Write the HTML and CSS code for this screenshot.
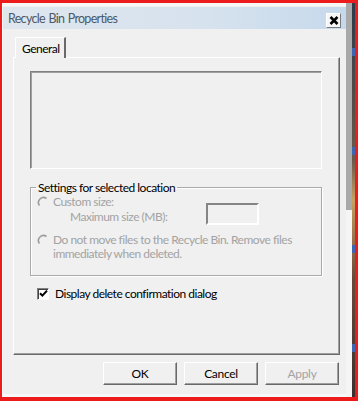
FILE: index.html
```html
<!doctype html>
<html lang="en">
  <head>
    <meta charset="utf-8" />
    <meta name="viewport" content="width=device-width, initial-scale=1" />
    <title>Recycle Bin Properties</title>
    <link rel="stylesheet" href="styles.css">
  </head>
  <body>
    <div class="frame">
      <div class="window">
        <div class="titlebar">
          <span class="title">Recycle Bin Properties</span>
          <button class="close" aria-label="Close">
            <svg width="10" height="9" viewBox="0 0 10 9">
              <path d="M1.5 1 L8.5 8 M8.5 1 L1.5 8" stroke="#000" stroke-width="2.6" />
            </svg>
          </button>
        </div>

        <div class="content">
          <div class="tabs">
            <div class="tab">General</div>
          </div>

          <div class="panel">
            <div class="listbox"></div>

            <fieldset class="group">
              <legend>Settings for selected location</legend>

              <div class="option">
                <svg class="radio" width="12" height="12" viewBox="0 0 12 12">
                  <circle cx="6" cy="6" r="5" fill="#f0f0f0" />
                  <path d="M2.5 9.5 A5 5 0 0 1 9.5 2.5" fill="none" stroke="#9c9c9c" stroke-width="1.6" />
                </svg>
                <div class="option-text">
                  <div>Custom size:</div>
                  <div class="max-row">
                    <span class="max-label">Maximum size (MB):</span>
                    <span class="textbox"></span>
                  </div>
                </div>
              </div>

              <div class="option">
                <svg class="radio" width="12" height="12" viewBox="0 0 12 12">
                  <circle cx="6" cy="6" r="5" fill="#f0f0f0" />
                  <path d="M2.5 9.5 A5 5 0 0 1 9.5 2.5" fill="none" stroke="#9c9c9c" stroke-width="1.6" />
                </svg>
                <div class="option-text">
                  Do not move files to the Recycle Bin. Remove files<br />
                  immediately when deleted.
                </div>
              </div>
            </fieldset>

            <label class="check-row">
              <span class="checkbox">
                <svg width="9" height="9" viewBox="0 0 9 9">
                  <path d="M1 4.2 L3.4 6.6 L8 1.6" fill="none" stroke="#000" stroke-width="2" />
                </svg>
              </span>
              Display delete confirmation dialog
            </label>
          </div>

          <div class="buttons">
            <button class="btn">OK</button>
            <button class="btn">Cancel</button>
            <button class="btn" disabled>Apply</button>
          </div>
        </div>
      </div>

      <div class="desk">
        <div class="scroll">
          <div class="thumb"></div>
        </div>
        <div class="strip">
          <span class="dot"></span>
          <span class="dot"></span>
          <span class="dot"></span>
          <span class="dot"></span>
        </div>
      </div>
    </div>
  </body>
</html>
```

FILE: styles.css
```css
:root {
  --face: #f0f0f0;
  --shadow: #a0a0a0;
  --dark: #696969;
  --disabled: #a3a3a3;
  --red: #ed1c1c;
}

html,
body {
  margin: 0;
  padding: 0;
  background-color: var(--red);
}

body {
  font-family: Lato, 'Noto Sans', sans-serif;
  font-size: 12px;
  letter-spacing: -0.5px;
  color: #000;
}

.frame {
  box-sizing: border-box;
  width: 358px;
  height: 401px;
  padding: 3px 3px 4px 2px;
  display: flex;
}

.window {
  flex: 1;
  display: flex;
  flex-direction: column;
  background-color: var(--face);
  border-left: 1px solid #fbfbfb;
  border-top: 3px solid #f7f7f7;
  border-bottom: 3px solid #f6f8fb;
}

.titlebar {
  height: 22px;
  margin-top: 1px;
  display: flex;
  align-items: center;
  justify-content: space-between;
  padding: 0 5px 0 5px;
  background: linear-gradient(90deg, #dfe6ee 0%, #d6e2ee 60%, #c6d9ec 100%);
}

.title {
  font-size: 12.5px;
  letter-spacing: -0.7px;
  word-spacing: 1px;
  color: #4c5966;
}

.close {
  box-sizing: border-box;
  width: 15px;
  height: 15px;
  margin-top: 4px;
  padding: 0;
  display: flex;
  align-items: center;
  justify-content: center;
  background: #f6f6f6;
  border: 1px solid;
  border-color: #ffffff #7a7a7a #7a7a7a #ffffff;
}

.content {
  flex: 1;
  display: flex;
  flex-direction: column;
  padding: 8px 6px 0 10px;
}

.tabs {
  display: flex;
  height: 20px;
  padding-left: 2px;
}

.tab {
  box-sizing: border-box;
  width: 51px;
  height: 21px;
  padding: 3px 0 0 6px;
  background-color: var(--face);
  border-top: 1px solid #ffffff;
  border-left: 1px solid #ffffff;
  border-right: 2px solid var(--dark);
  position: relative;
  z-index: 1;
}

.panel {
  box-sizing: border-box;
  height: 298px;
  padding: 13px 17px 0 16px;
  border: 1px solid;
  border-color: #ffffff var(--dark) var(--dark) #ffffff;
  box-shadow: inset -1px -1px 0 var(--shadow);
}

.listbox {
  height: 96px;
  border: 1px solid;
  border-color: #808080 #ffffff #ffffff #808080;
  box-shadow: inset 1px 1px 0 #a0a0a0;
}

.group {
  margin: 11px 0 0;
  padding: 0 0 10px 6px;
  height: 84px;
  border: 1px solid #a9a9a9;
  box-shadow: 1px 1px 0 #ffffff, inset 1px 1px 0 #ffffff;
}

.group legend {
  padding: 0 2px;
  margin-left: -1px;
}

.option {
  display: flex;
  align-items: flex-start;
  gap: 4px;
  color: var(--disabled);
  line-height: 14px;
}

.option + .option {
  margin-top: 8px;
}

.radio {
  margin-top: 1px;
  flex: none;
}

.max-row {
  display: flex;
  align-items: flex-start;
  padding-left: 17px;
}

.max-label {
  width: 136px;
  margin-top: 1px;
}

.textbox {
  box-sizing: border-box;
  width: 53px;
  height: 22px;
  margin-top: -6px;
  border: 2px solid;
  border-color: #858585 #ffffff #ffffff #858585;
}

.check-row {
  display: flex;
  align-items: center;
  gap: 6px;
  margin: 10px 0 0 7px;
}

.checkbox {
  box-sizing: border-box;
  width: 12px;
  height: 12px;
  display: flex;
  align-items: center;
  justify-content: center;
  background-color: #ffffff;
  border: 1px solid;
  border-color: #808080 #ffffff #ffffff #808080;
  box-shadow: inset 1px 1px 0 #404040;
}

.buttons {
  display: flex;
  justify-content: flex-end;
  gap: 7px;
  padding: 7px 1px 0 0;
}

.btn {
  box-sizing: border-box;
  width: 74px;
  height: 23px;
  padding: 0;
  font-family: inherit;
  font-size: 12px;
  letter-spacing: -0.3px;
  color: #000;
  background-color: var(--face);
  border: 1px solid;
  border-color: #ffffff var(--dark) var(--dark) #ffffff;
  box-shadow: inset -1px -1px 0 var(--shadow);
}

.btn:disabled {
  color: var(--disabled);
}

.desk {
  width: 9px;
  display: flex;
}

.scroll {
  width: 6px;
  background-color: #f5f5f5;
}

.thumb {
  height: 207px;
  background-color: #a9a9a9;
}

.strip {
  flex: 1;
  display: flex;
  flex-direction: column;
  justify-content: space-around;
  background: linear-gradient(180deg, #2c3a4a 0%, #6a5a4a 40%, #c8a060 50%, #6a4a3a 70%, #3a3030 100%);
}

.dot {
  height: 8px;
  background-color: #3c66b0;
}
```
